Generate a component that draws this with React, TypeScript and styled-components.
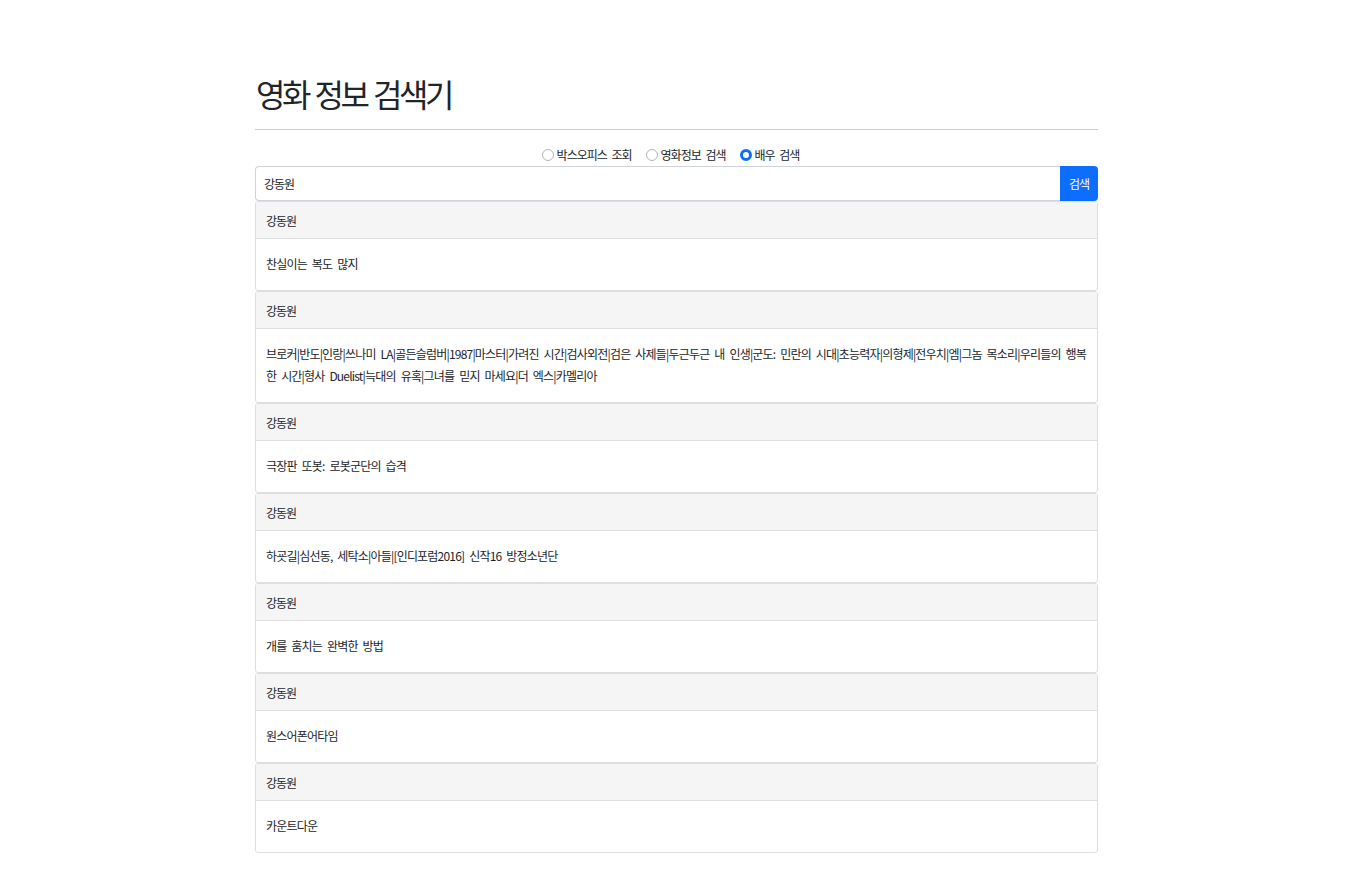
import React, { useState } from "react";
import styled, { createGlobalStyle } from "styled-components";

const GlobalStyle = createGlobalStyle`
  html, body { margin: 0; padding: 0; background: #fff; }
  body {
    font-family: "Noto Sans CJK KR", "Noto Sans", "Liberation Sans", sans-serif;
    color: #212529;
  }
  * { box-sizing: border-box; }
`;

const Container = styled.div`
  width: 843px;
  margin-left: 255px;
  padding-top: 73px;
`;

const Title = styled.h1`
  margin: 0;
  font-size: 32px;
  font-weight: 400;
  line-height: 40px;
  padding-left: 1px;
  letter-spacing: -3.5px;
  word-spacing: 3px;
`;

const Rule = styled.hr`
  margin: 16px 0 0;
  border: 0;
  border-top: 1px solid #cccccc;
`;

const RadioRow = styled.div`
  display: flex;
  justify-content: center;
  align-items: center;
  gap: 14px;
  height: 36px;
  padding-top: 14px;
  padding-right: 12px;
  font-size: 12px;
  line-height: 14px;
  letter-spacing: -1px;
  word-spacing: 3px;
`;

const RadioLabel = styled.label`
  display: flex;
  align-items: center;
  gap: 3px;
  cursor: pointer;
`;

const RadioDot = styled.span<{ $on: boolean }>`
  width: 12px;
  height: 12px;
  border-radius: 50%;
  border: ${(p) => (p.$on ? "3px solid #0d6efd" : "1px solid #b5b5b5")};
  background: #fff;
  display: inline-block;
`;

const SearchRow = styled.div`
  display: flex;
  height: 35px;
`;

const SearchInput = styled.input`
  flex: 1;
  height: 35px;
  border: 1px solid #ced4da;
  border-right: 0;
  border-radius: 4px 0 0 4px;
  padding: 0 8px;
  font-family: inherit;
  font-size: 12px;
  letter-spacing: -1px;
  color: #212529;
  outline: none;
`;

const SearchButton = styled.button`
  width: 38px;
  height: 35px;
  border: 0;
  border-radius: 0 4px 4px 0;
  background: #0d6efd;
  color: #fff;
  font-family: inherit;
  font-size: 12px;
  letter-spacing: -1px;
  padding: 0;
`;

const List = styled.div`
  display: flex;
  flex-direction: column;
  padding-bottom: 24px;
`;

const Card = styled.div`
  border: 1px solid #dedede;
  border-radius: 3px;
  background: #fff;
`;

const CardHeader = styled.div`
  height: 37px;
  background: #f5f5f5;
  border-bottom: 1px solid #dedede;
  padding: 0 10px;
  display: flex;
  align-items: center;
  font-size: 12px;
  letter-spacing: -1px;
`;

const CardBody = styled.div`
  min-height: 51px;
  padding: 14px 10px 15px;
  font-size: 12px;
  line-height: 22px;
  letter-spacing: -0.8px;
  word-spacing: 3px;
  word-break: break-all;
`;

const options = ["박스오피스 조회", "영화정보 검색", "배우 검색"];

const results = [
  "찬실이는 복도 많지",
  "브로커|반도|인랑|쓰나미 LA|골든슬럼버|1987|마스터|가려진 시간|검사외전|검은 사제들|두근두근 내 인생|군도: 민란의 시대|초능력자|의형제|전우치|엠|그놈 목소리|우리들의 행복한 시간|형사 Duelist|늑대의 유혹|그녀를 믿지 마세요|더 엑스|카멜리아",
  "극장판 또봇: 로봇군단의 습격",
  "하굣길|심선동, 세탁소|아들|[인디포럼2016] 신작16 방정소년단",
  "개를 훔치는 완벽한 방법",
  "원스어폰어타임",
  "카운트다운",
];

export default function App() {
  const [mode, setMode] = useState(2);
  return (
    <>
      <GlobalStyle />
      <Container>
        <Title>영화 정보 검색기</Title>
        <Rule />
        <RadioRow>
          {options.map((o, i) => (
            <RadioLabel key={o} onClick={() => setMode(i)}>
              <RadioDot $on={mode === i} />
              {o}
            </RadioLabel>
          ))}
        </RadioRow>
        <SearchRow>
          <SearchInput defaultValue="강동원" />
          <SearchButton>검색</SearchButton>
        </SearchRow>
        <List>
          {results.map((r, i) => (
            <Card key={i}>
              <CardHeader>강동원</CardHeader>
              <CardBody>{r}</CardBody>
            </Card>
          ))}
        </List>
      </Container>
    </>
  );
}
